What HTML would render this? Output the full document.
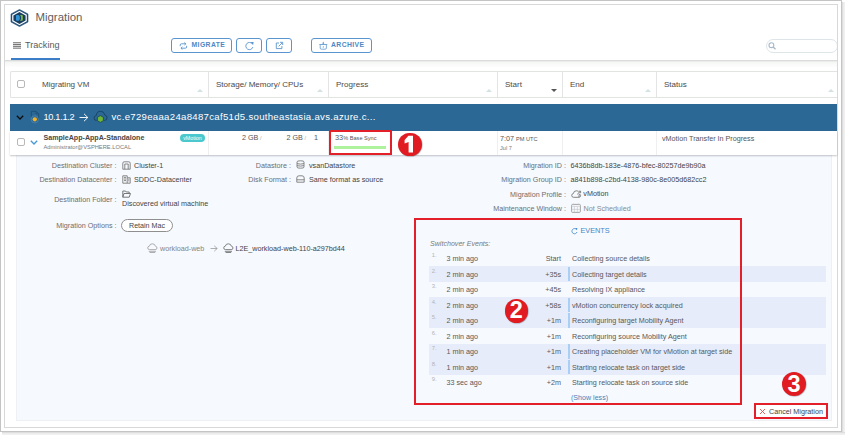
<!DOCTYPE html>
<html><head><meta charset="utf-8">
<style>
*{box-sizing:border-box;margin:0;padding:0}
html,body{width:845px;height:435px;overflow:hidden;background:#fff;font-family:"Liberation Sans",sans-serif;color:#565656}
.a{position:absolute;white-space:nowrap}
.btn{position:absolute;top:38px;height:15px;border:1px solid #5b95cf;border-radius:3px;color:#4d88c6;font-weight:bold;font-size:6.8px;letter-spacing:0.42px;line-height:13px}
.th{position:absolute;top:72.3px;height:26px;font-size:8.05px;color:#4a4a4a;line-height:26px}
.sep{position:absolute;top:72px;width:1px;height:25px;background:#e4e4e4}
.sort{position:absolute;top:89px;width:0;height:0;border-left:3px solid transparent;border-right:3px solid transparent;border-bottom:3px solid #d3e1e3}
.lbl{position:absolute;font-size:7.2px;color:#6e6e6e;text-align:right;white-space:nowrap;line-height:10px}
.val{position:absolute;font-size:7.2px;color:#444;white-space:nowrap;line-height:10px}
.ev{position:absolute;left:429px;width:397px;height:15.5px;font-size:7.2px;line-height:15.5px;color:#585858}
.ev.hl{background:#e7ecfa}
.ev .n{position:absolute;left:2.8px;top:-2.4px;font-size:5.8px;color:#b4b4b4}
.ev .t{position:absolute;left:17.5px;top:0.6px}
.ev .d{position:absolute;right:265px;text-align:right;top:0.6px}
.ev .x{position:absolute;left:143px;top:0.6px}
.ev.hl .bar{position:absolute;left:139px;top:0.5px;width:1.5px;height:14.5px;background:#a9d0f4}
.badge{position:absolute;border-radius:50%;background:#e11b22;color:#fff;font-weight:bold;text-align:center;box-shadow:0.5px 0.5px 1px rgba(0,0,0,0.35)}
</style></head><body>
<div class="a" style="left:842px;top:2px;width:3px;height:433px;background:linear-gradient(90deg,#d6d6d6,#ebebeb 45%,#f3f3f3)"></div>
<div class="a" style="left:2px;top:432px;width:843px;height:3px;background:linear-gradient(180deg,#d6d6d6,#ebebeb 45%,#f3f3f3)"></div>
<div class="a" style="left:0;top:0;width:842px;height:432px;border:1px solid #c4c4c4;background:#fff"></div>
<div class="a" style="left:4px;top:4px;width:834px;height:424px;border:1px solid #d8d8d8;background:#fff"></div>
<svg class="a" style="left:10px;top:9px" width="19" height="18" viewBox="0 0 19 18">
  <polygon points="9.5,0.4 18,5 18,13 9.5,17.6 1,13 1,5" fill="#1f4d75" stroke="#1f4d75" stroke-width="0.6" stroke-linejoin="round"/>
  <polygon points="9.5,1.7 16.8,5.7 16.8,12.3 9.5,16.3 2.2,12.3 2.2,5.7" fill="#fff"/>
  <polygon points="9.5,3.1 15.6,6.4 15.6,11.6 9.5,14.9 3.4,11.6 3.4,6.4" fill="#1b3f61"/>
  <path d="M6,7 Q6,6 7,6 H8.6 Q9.9,6.6 9.9,8.9 Q9.9,11.2 8.6,11.8 H7 Q6,11.8 6,10.8 Z" fill="#2f93d8"/>
  <path d="M9.9,6.1 H11.8 Q12.8,6.1 12.8,7.1 V10.8 Q12.8,11.8 11.8,11.8 H9.9 Q11.1,11 11.1,8.95 Q11.1,6.9 9.9,6.1 Z" fill="#78bd3f"/>
</svg>
<div class="a" style="left:35.5px;top:11px;font-size:11.4px;line-height:13px;color:#5e5e5e">Migration</div>
<svg class="a" style="left:13px;top:42px" width="8" height="7" viewBox="0 0 8 7"><rect x="0" y="0.2" width="8" height="1.1" fill="#777"/><rect x="0" y="2" width="8" height="1.1" fill="#777"/><rect x="0" y="3.8" width="8" height="1.1" fill="#777"/><rect x="0" y="5.6" width="8" height="1.1" fill="#777"/></svg>
<div class="a" style="left:25px;top:39.5px;font-size:9.1px;line-height:11px;color:#5a5a5a">Tracking</div>
<div class="a" style="left:11px;top:58px;width:49px;height:2px;background:#3b7dc6"></div>
<div class="a" style="left:5px;top:60px;width:832px;height:1px;background:#dbdbdb"></div>
<div class="a" style="left:5px;top:61px;width:832px;height:1px;background:#ebedeb"></div>
<div class="a" style="left:5px;top:62px;width:832px;height:5px;background:linear-gradient(180deg,#f5f7f5,#fdfdfd)"></div>
<div class="btn" style="left:171px;width:61px"><svg class="a" style="left:6.8px;top:2.8px" width="9" height="8" viewBox="0 0 9 8"><path d="M1.2,4.2 V3 Q1.2,1.8 2.4,1.8 H6.8 M5.4,0.5 L6.9,1.8 L5.4,3.1 M7.6,3.8 V5 Q7.6,6.2 6.4,6.2 H2 M3.4,4.9 L1.9,6.2 L3.4,7.5" fill="none" stroke="#5b95cf" stroke-width="0.9"/></svg><span class="a" style="left:19.5px;top:-1.5px">MIGRATE</span></div>
<div class="btn" style="left:236px;width:26px"><svg class="a" style="left:7.5px;top:1.6px" width="10" height="10" viewBox="0 0 10 10"><path d="M7.4,3 A3.6,3.6 0 1 0 7.9,6" fill="none" stroke="#5b95cf" stroke-width="0.9"/><path d="M5.6,0.9 L8.6,1.1 L8.1,4.1 Z" fill="#5b95cf"/></svg></div>
<div class="btn" style="left:266px;width:26px"><svg class="a" style="left:7.6px;top:1.7px" width="9" height="9" viewBox="0 0 9 9"><path d="M4,2 H1.3 V7.6 H6.9 V5" fill="none" stroke="#5b95cf" stroke-width="0.9"/><path d="M3.6,5.4 L7.4,1.6 M5,1.3 H7.7 V4" fill="none" stroke="#5b95cf" stroke-width="0.9"/></svg></div>
<div class="btn" style="left:311px;width:61px"><svg class="a" style="left:7px;top:1.8px" width="9" height="9" viewBox="0 0 9 9"><path d="M0.3,3.1 H8.3 V4.1 H0.3 Z M3.4,3.1 Q3.6,1.4 4.3,0.6 Q5,1.4 5.2,3.1 Z" fill="#5b95cf" opacity="0.85"/><path d="M1.2,4.1 V7 Q1.2,8.2 2.4,8.2 H6.2 Q7.4,8.2 7.4,7 V4.1" fill="none" stroke="#5b95cf" stroke-width="0.9" opacity="0.85"/><circle cx="4.3" cy="5.9" r="0.6" fill="#5b95cf"/></svg><span class="a" style="left:19px;top:-1.5px">ARCHIVE</span></div>
<div class="a" style="left:766px;top:39px;width:72px;height:14px;border:1px solid #dde5e9;border-radius:7px;background:#fff"></div>
<div class="a" style="left:837px;top:36px;width:1px;height:20px;background:#d8d8d8"></div>
<div class="a" style="left:838px;top:36px;width:3px;height:20px;background:#fff"></div>
<svg class="a" style="left:768px;top:42px" width="9" height="8" viewBox="0 0 9 8"><circle cx="3.4" cy="3.2" r="2.4" fill="none" stroke="#a7b9c8" stroke-width="1.1"/><path d="M5.2,5 L7.5,7.3" stroke="#a7b9c8" stroke-width="1.3"/></svg>
<div class="a" style="left:10px;top:71px;width:827px;height:27px;border:1px solid #e2e4e2;border-right:none;border-radius:2px 0 0 2px"></div>
<div class="a" style="left:17px;top:80px;width:8px;height:8px;border:1px solid #b8b8b8;border-radius:2px"></div>
<div class="th" style="left:42px">Migrating VM</div>
<div class="sort" style="left:197px"></div>
<div class="sep" style="left:208px"></div>
<div class="th" style="left:216px">Storage/ Memory/ CPUs</div>
<div class="sort" style="left:317px"></div>
<div class="sep" style="left:328px"></div>
<div class="th" style="left:336px">Progress</div>
<div class="sort" style="left:486px"></div>
<div class="sep" style="left:497px"></div>
<div class="th" style="left:505px">Start</div>
<div class="sep" style="left:562px"></div>
<div class="th" style="left:570px">End</div>
<div class="sort" style="left:645px"></div>
<div class="sep" style="left:656px"></div>
<div class="th" style="left:664px">Status</div>
<div class="sort" style="left:828px"></div>
<div class="a" style="left:551px;top:89px;width:0;height:0;border-left:3px solid transparent;border-right:3px solid transparent;border-top:3px solid #555"></div>
<div class="a" style="left:10px;top:104px;width:827px;height:27px;background:#2b6896"></div>
<svg class="a" style="left:16px;top:115px" width="8" height="5" viewBox="0 0 8 5"><path d="M0.8,0.8 L4,4 L7.2,0.8" fill="none" stroke="#0d0d0d" stroke-width="1.3"/></svg>
<svg class="a" style="left:30px;top:110px" width="10" height="14" viewBox="0 0 10 14"><path d="M1.3,7 V1.3 H6 L8.6,3.9 V8" fill="none" stroke="#1d4e74" stroke-width="0.9"/><path d="M6,1.3 V3.9 H8.6" fill="none" stroke="#1d4e74" stroke-width="0.7"/><circle cx="4.8" cy="9.3" r="3.6" fill="#2b6896" stroke="#5a8db5" stroke-width="0.6"/><circle cx="4.8" cy="9.3" r="2.1" fill="#f5b223"/></svg>
<div class="a" style="left:43.5px;top:110.5px;font-size:9.2px;line-height:13px;color:#fff;letter-spacing:-0.3px">10.1.1.2</div>
<svg class="a" style="left:79px;top:112.5px" width="10" height="9" viewBox="0 0 10 9"><path d="M0.5,4.5 H9 M5,0.8 L8.8,4.5 L5,8.2" fill="none" stroke="#eef4f8" stroke-width="1"/></svg>
<svg class="a" style="left:93px;top:110px" width="15" height="14" viewBox="0 0 15 14"><path d="M3.6,10.5 Q1,10.5 1,8 Q1,5.8 3.2,5.6 Q3.6,1.3 7.6,1.3 Q11.2,1.3 11.8,5 Q14,5.3 14,7.8 Q14,10.3 11.4,10.5" fill="none" stroke="#17415f" stroke-width="0.9"/><polygon points="7.4,5.6 10.4,7.3 10.4,10.7 7.4,12.4 4.4,10.7 4.4,7.3" fill="#6fb537" stroke="#17415f" stroke-width="0.8"/></svg>
<div class="a" style="left:111.5px;top:110.4px;font-size:9.6px;line-height:13px;color:#fff;letter-spacing:0.3px">vc.e729eaaa24a8487caf51d5.southeastasia.avs.azure.c...</div>
<div class="a" style="left:16px;top:154px;width:816px;height:267px;background:#f6f9fe;border:1.5px solid #eef0f3;border-top:none"></div>
<div class="a" style="left:10px;top:131px;width:827px;height:24px;background:#fff;box-shadow:0 1px 1.5px rgba(60,70,80,0.3)"></div>
<div class="a" style="left:17px;top:138px;width:8px;height:8px;border:1px solid #b8b8b8;border-radius:2px"></div>
<svg class="a" style="left:30px;top:140px" width="8" height="5" viewBox="0 0 8 5"><path d="M0.8,0.8 L4,4 L7.2,0.8" fill="none" stroke="#4a9ad4" stroke-width="1.4"/></svg>
<div class="a" style="left:43.5px;top:132.5px;font-size:7.1px;line-height:10px;font-weight:bold;color:#484848">SampleApp-AppA-Standalone</div>
<div class="a" style="left:43.5px;top:142.5px;font-size:5.75px;line-height:9px;color:#7a7a7a">Administrator@VSPHERE.LOCAL</div>
<div class="a" style="left:180px;top:134px;width:25px;height:8px;border-radius:4px;background:#4ac8cd;color:#fff;font-size:5.3px;line-height:8px;text-align:center">vMotion</div>
<div class="a" style="left:242px;top:133px;font-size:7.2px;line-height:10px;color:#555">2 GB<span style="color:#aaa;font-size:5.5px"> /</span></div>
<div class="a" style="left:286.5px;top:133px;font-size:7.2px;line-height:10px;color:#555">2 GB<span style="color:#aaa;font-size:5.5px"> /</span></div>
<div class="a" style="left:314px;top:133px;font-size:7.2px;line-height:10px;color:#555">1</div>
<div class="a" style="left:208px;top:131px;width:1px;height:24px;background:#efefef"></div>
<div class="a" style="left:328px;top:131px;width:1px;height:24px;background:#efefef"></div>
<div class="a" style="left:497px;top:131px;width:1px;height:24px;background:#efefef"></div>
<div class="a" style="left:562px;top:131px;width:1px;height:24px;background:#efefef"></div>
<div class="a" style="left:656px;top:131px;width:1px;height:24px;background:#efefef"></div>
<div class="a" style="left:329px;top:130px;width:63px;height:25px;border:2px solid #e3202a"></div>
<div class="a" style="left:335px;top:133px;font-size:7.4px;line-height:10px;color:#555">33<span style="font-size:5.6px">% Base Sync</span></div>
<div class="a" style="left:334px;top:146px;width:52px;height:3px;background:#aef29e"></div>
<div class="badge" style="left:398px;top:132.5px;width:23.5px;height:23.5px"><svg class="a" style="left:0;top:0" width="23.5" height="23.5" viewBox="0 0 23.5 23.5"><polygon points="10.4,2.7 15,2.7 15,19.5 10.6,19.5 10.6,8.9 6.6,10.6 6.6,6.9 Q9.6,5.6 10.4,2.7" fill="#fff"/></svg></div>
<div class="a" style="left:500px;top:133.5px;font-size:7.2px;line-height:10px;color:#555">7:07 <span style="font-size:5.6px">PM UTC</span></div>
<div class="a" style="left:500px;top:143.5px;font-size:5.6px;line-height:9px;color:#777">Jul 7</div>
<div class="a" style="left:662px;top:133.5px;font-size:7.2px;line-height:10px;color:#555">vMotion Transfer In Progress</div>
<div class="lbl" style="left:17px;width:99.5px;top:160.5px">Destination Cluster :</div>
<div class="lbl" style="left:17px;width:99.5px;top:175px">Destination Datacenter :</div>
<div class="lbl" style="left:17px;width:99.5px;top:194.5px">Destination Folder :</div>
<div class="lbl" style="left:17px;width:99.5px;top:220.5px">Migration Options :</div>
<svg class="a" style="left:122px;top:160.5px" width="9" height="9" viewBox="0 0 9 9"><path d="M0.8,8.2 V2.2 Q0.8,0.8 2.2,0.8 H6.8 Q8.2,0.8 8.2,2.2 V8.2 Z M2.8,8.2 V3 M6.2,8.2 V3 M2.8,3 H6.2" fill="none" stroke="#7a7a7a" stroke-width="0.9"/></svg>
<div class="val" style="left:134px;top:160.5px;">Cluster-1</div>
<svg class="a" style="left:122px;top:175px" width="9" height="9" viewBox="0 0 9 9"><path d="M0.8,8.2 V0.8 H5.2 V8.2 Z M5.2,2.8 H8.2 V8.2 H5.2 M2,2.4 H4 M2,4 H4 M2,5.6 H4 M6.2,4.2 H7.3 M6.2,5.8 H7.3" fill="none" stroke="#7a7a7a" stroke-width="0.9"/></svg>
<div class="val" style="left:134px;top:175px;">SDDC-Datacenter</div>
<svg class="a" style="left:122px;top:189.5px" width="9" height="8" viewBox="0 0 9 8"><path d="M0.8,7.2 V1 H3.5 L4.3,2 H7.2 V3.2 M0.8,7.2 L2,3.5 H8.5 L7.2,7.2 Z" fill="none" stroke="#6a6a6a" stroke-width="0.9"/></svg>
<div class="val" style="left:122px;top:198.5px;">Discovered virtual machine</div>
<div class="a" style="left:121px;top:219px;width:52px;height:13px;border:1px solid #8f8f8f;border-radius:6.5px;font-size:7.1px;line-height:12px;text-align:center;color:#444;background:#fff">Retain Mac</div>
<div class="lbl" style="left:190px;width:101px;top:160.5px">Datastore :</div>
<div class="lbl" style="left:190px;width:101px;top:174.5px">Disk Format :</div>
<svg class="a" style="left:296px;top:160px" width="9" height="9" viewBox="0 0 9 9"><path d="M1,1.8 Q1,0.8 4.5,0.8 Q8,0.8 8,1.8 V7.2 Q8,8.2 4.5,8.2 Q1,8.2 1,7.2 Z M1,3.6 Q4.5,4.6 8,3.6 M1,5.6 Q4.5,6.6 8,5.6" fill="none" stroke="#7a7a7a" stroke-width="0.9"/></svg>
<div class="val" style="left:309px;top:160.5px;">vsanDatastore</div>
<svg class="a" style="left:296px;top:175px" width="9" height="8" viewBox="0 0 9 8"><path d="M0.8,7.2 V3 Q0.8,0.8 3,0.8 H6 Q8.2,0.8 8.2,3 V7.2 Z M0.8,4.8 H8.2" fill="none" stroke="#7a7a7a" stroke-width="0.9"/></svg>
<div class="val" style="left:309px;top:174.5px;">Same format as source</div>
<svg class="a" style="left:146.5px;top:243px" width="11" height="10" viewBox="0 0 11 10"><path d="M2.6,6.6 Q0.7,6.6 0.7,4.9 Q0.7,3.3 2.3,3.2 Q2.8,0.8 5.3,0.8 Q7.9,0.8 8.4,3.2 Q10,3.4 10,5 Q10,6.6 8.2,6.6 Z M1.8,8.3 H9 M2.6,9.5 H8.2" fill="none" stroke="#9a9a9a" stroke-width="0.8"/></svg>
<div class="val" style="left:160px;top:243.6px;color:#858585">workload-web</div>
<svg class="a" style="left:210px;top:244.5px" width="8" height="7" viewBox="0 0 8 7"><path d="M0.5,3.5 H7.2 M4.2,0.8 L7.2,3.5 L4.2,6.2" fill="none" stroke="#9a9a9a" stroke-width="0.8"/></svg>
<svg class="a" style="left:223px;top:243px" width="11" height="10" viewBox="0 0 11 10"><path d="M2.6,6.6 Q0.7,6.6 0.7,4.9 Q0.7,3.3 2.3,3.2 Q2.8,0.8 5.3,0.8 Q7.9,0.8 8.4,3.2 Q10,3.4 10,5 Q10,6.6 8.2,6.6 Z M1.8,8.3 H9 M2.6,9.5 H8.2" fill="none" stroke="#666" stroke-width="0.8"/></svg>
<div class="val" style="left:235.5px;top:243.6px;">L2E_workload-web-110-a297bd44</div>
<div class="lbl" style="left:440px;width:126px;top:160.5px">Migration ID :</div>
<div class="lbl" style="left:440px;width:126px;top:175px">Migration Group ID :</div>
<div class="lbl" style="left:440px;width:126px;top:189.5px">Migration Profile :</div>
<div class="lbl" style="left:440px;width:126px;top:204px">Maintenance Window :</div>
<div class="val" style="left:570.5px;top:160.5px;">6436b8db-183e-4876-bfec-80257de9b90a</div>
<div class="val" style="left:570.5px;top:175px;">a841b898-c2bd-4138-980c-8e005d682cc2</div>
<svg class="a" style="left:570.5px;top:189.5px" width="11" height="8" viewBox="0 0 11 8"><path d="M2.6,7.3 Q0.7,7.3 0.7,5.4 Q0.7,3.8 2.3,3.6 Q2.7,0.8 5.3,0.8 Q6.8,0.8 7.6,2 M8.3,4 Q9.6,4.3 9.6,5.7 Q9.6,7.3 7.8,7.3 Z M2.6,7.3 H7.8 M7.6,1.2 H9.6 V3.2 M6.2,4.3 L9.4,1.4" fill="none" stroke="#6f6f6f" stroke-width="0.85"/></svg>
<div class="val" style="left:583.3px;top:189px;">vMotion</div>
<svg class="a" style="left:571px;top:203px" width="10" height="10" viewBox="0 0 10 10"><rect x="0.6" y="1.4" width="8.8" height="8" rx="1" fill="none" stroke="#9a9a9a" stroke-width="0.9"/><path d="M0.6,3.4 H9.4 M3.4,3.4 V9.4 M6.4,3.4 V9.4 M0.6,6.4 H9.4 M2.4,0.4 V2.2 M7.6,0.4 V2.2" fill="none" stroke="#c4c4c4" stroke-width="0.6"/></svg>
<div class="val" style="left:583.5px;top:204px;color:#8a8a8a">Not Scheduled</div>
<svg class="a" style="left:571px;top:226.8px" width="7" height="8" viewBox="0 0 7 8"><path d="M5.6,2.6 A2.6,2.6 0 1 0 6,5" fill="none" stroke="#4a90d0" stroke-width="0.9"/><path d="M4.2,1 L6.3,1.1 L6,3.2 Z" fill="#4a90d0"/></svg>
<div class="a" style="left:580.5px;top:225.8px;font-size:7.3px;line-height:10px;color:#3f87c8">EVENTS</div>
<div class="a" style="left:430px;top:238.8px;font-size:7.1px;line-height:10px;color:#7a7a7a;font-style:italic">Switchover Events:</div>
<div class="ev" style="top:250.6px"><span class="n">1.</span><span class="t">3 min ago</span><span class="d">Start</span><span class="bar"></span><span class="x">Collecting source details</span></div>
<div class="ev hl" style="top:266.1px"><span class="n">2.</span><span class="t">2 min ago</span><span class="d">+35s</span><span class="bar"></span><span class="x">Collecting target details</span></div>
<div class="ev" style="top:281.6px"><span class="n">3.</span><span class="t">2 min ago</span><span class="d">+45s</span><span class="bar"></span><span class="x">Resolving IX appliance</span></div>
<div class="ev hl" style="top:297.1px"><span class="n">4.</span><span class="t">2 min ago</span><span class="d">+58s</span><span class="bar"></span><span class="x">vMotion concurrency lock acquired</span></div>
<div class="ev hl" style="top:312.6px"><span class="n">5.</span><span class="t">2 min ago</span><span class="d">+1m</span><span class="bar"></span><span class="x">Reconfiguring target Mobility Agent</span></div>
<div class="ev" style="top:328.1px"><span class="n">6.</span><span class="t">2 min ago</span><span class="d">+1m</span><span class="bar"></span><span class="x">Reconfiguring source Mobility Agent</span></div>
<div class="ev hl" style="top:343.6px"><span class="n">7.</span><span class="t">1 min ago</span><span class="d">+1m</span><span class="bar"></span><span class="x">Creating placeholder VM for vMotion at target side</span></div>
<div class="ev hl" style="top:359.1px"><span class="n">8.</span><span class="t">1 min ago</span><span class="d">+1m</span><span class="bar"></span><span class="x">Starting relocate task on target side</span></div>
<div class="ev" style="top:374.6px"><span class="n">9.</span><span class="t">33 sec ago</span><span class="d">+2m</span><span class="bar"></span><span class="x">Starting relocate task on source side</span></div>
<div class="a" style="left:571px;top:392.5px;font-size:7.1px;line-height:10px;color:#4a7fb5">(Show less)</div>
<div class="a" style="left:414px;top:218px;width:328px;height:187px;border:2px solid #e3202a"></div>
<div class="badge" style="left:504.5px;top:299px;width:23.5px;height:23.5px;font-size:23.5px;line-height:23.5px">2</div>
<div class="badge" style="left:782px;top:372px;width:24px;height:24px;font-size:23.5px;line-height:24px">3</div>
<div class="a" style="left:754px;top:403px;width:74px;height:16px;border:2px solid #e3202a;background:#fff"></div>
<svg class="a" style="left:759px;top:407.5px" width="7" height="7" viewBox="0 0 7 7"><path d="M1,1 L6,6 M6,1 L1,6" stroke="#d9534f" stroke-width="0.9"/></svg>
<div class="a" style="left:769px;top:406.5px;font-size:7.2px;line-height:10px;color:#444">Cancel Migration</div>
</body></html>
